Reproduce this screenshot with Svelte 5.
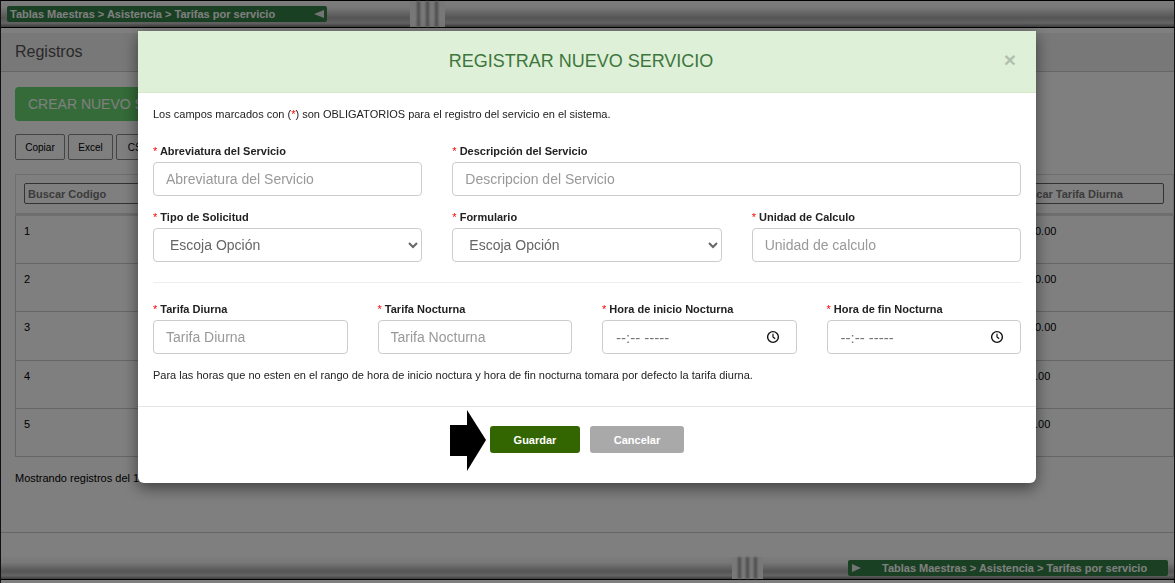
<script>
  const ruta = 'Tablas Maestras > Asistencia > Tarifas por servicio';
  const exportar = ['Copiar', 'Excel', 'CSV'];
  const filas = [
    { codigo: 1, tarifa: '15000.00' },
    { codigo: 2, tarifa: '15000.00' },
    { codigo: 3, tarifa: '15000.00' },
    { codigo: 4, tarifa: '9000.00' },
    { codigo: 5, tarifa: '9000.00' }
  ];
</script>

<div class="page">
  <div class="bar top">
    <div class="crumb">
      <span>{ruta}</span>
      <i class="tri left"></i>
    </div>
    <div class="handle top-handle"><b></b><b></b><b></b></div>
  </div>

  <div class="heading">Registros</div>

  <div class="content">
    <button class="crear">CREAR NUEVO SERVICIO</button>
    <div class="exports">
      {#each exportar as e}
        <button class="exp">{e}</button>
      {/each}
    </div>

    <table>
      <colgroup><col /><col class="last" /></colgroup>
      <thead>
        <tr>
          <th><input class="buscar" placeholder="Buscar Codigo" /></th>
          <th><input class="buscar" placeholder="Buscar Tarifa Diurna" /></th>
        </tr>
      </thead>
      <tbody>
        {#each filas as f}
          <tr>
            <td>{f.codigo}</td>
            <td>{f.tarifa}</td>
          </tr>
        {/each}
      </tbody>
    </table>

    <p class="info">Mostrando registros del 1 al 5</p>
  </div>

  <div class="spacer"></div>
  <div class="strip"></div>

  <div class="bar bottom">
    <div class="handle bottom-handle"><b></b><b></b><b></b></div>
    <div class="crumb right">
      <i class="tri"></i>
      <span>{ruta}</span>
    </div>
  </div>
</div>

<div class="overlay">
  <div class="modal">
    <header>
      <h4>REGISTRAR NUEVO SERVICIO</h4>
      <span class="close">×</span>
    </header>

    <div class="body">
      <p class="note">Los campos marcados con (<em>*</em>) son OBLIGATORIOS para el registro del servicio en el sistema.</p>

      <div class="row r1">
        <label class="field">
          <span class="lbl"><em>*</em> Abreviatura del Servicio</span>
          <input placeholder="Abreviatura del Servicio" />
        </label>
        <label class="field wide">
          <span class="lbl"><em>*</em> Descripción del Servicio</span>
          <input placeholder="Descripcion del Servicio" />
        </label>
      </div>

      <div class="row r2">
        <label class="field">
          <span class="lbl"><em>*</em> Tipo de Solicitud</span>
          <select><option>Escoja Opción</option></select>
        </label>
        <label class="field">
          <span class="lbl"><em>*</em> Formulario</span>
          <select><option>Escoja Opción</option></select>
        </label>
        <label class="field">
          <span class="lbl"><em>*</em> Unidad de Calculo</span>
          <input placeholder="Unidad de calculo" />
        </label>
      </div>

      <hr />

      <div class="row r3">
        <label class="field">
          <span class="lbl"><em>*</em> Tarifa Diurna</span>
          <input placeholder="Tarifa Diurna" />
        </label>
        <label class="field">
          <span class="lbl"><em>*</em> Tarifa Nocturna</span>
          <input placeholder="Tarifa Nocturna" />
        </label>
        {#each ['Hora de inicio Nocturna', 'Hora de fin Nocturna'] as hora}
          <div class="field">
            <span class="lbl"><em>*</em> {hora}</span>
            <div class="time">
              <span>--:-- -----</span>
              <svg width="14" height="14" viewBox="0 0 14 14" fill="none" stroke="#111" stroke-width="1.4">
                <circle cx="7" cy="7" r="5.4" />
                <path d="M7 3.8V7l2.2 1.8" stroke-width="1.2" />
              </svg>
            </div>
          </div>
        {/each}
      </div>

      <p class="note hint">Para las horas que no esten en el rango de hora de inicio noctura y hora de fin nocturna tomara por defecto la tarifa diurna.</p>
    </div>

    <footer>
      <button class="guardar">Guardar</button>
      <button class="cancelar">Cancelar</button>
      <svg class="arrow" width="36" height="61" viewBox="0 0 36 61">
        <polygon points="0,15 17,15 17,0 36,30 17,61 17,46 0,46" fill="#000" />
      </svg>
    </footer>
  </div>
</div>

<style>
  :global(body) {
    margin: 0;
    font-family: "Liberation Sans", Arial, sans-serif;
    overflow: hidden;
  }

  .page {
    height: 583px;
    box-sizing: border-box;
    display: flex;
    flex-direction: column;
    background: #fff;
    border-left: 1px solid #222;
    border-right: 1px solid #222;
    color: #000;
    overflow: hidden;
  }

  .bar {
    display: flex;
    align-items: center;
    flex: none;
    background: linear-gradient(#fafafa, #f0f0f0 25%, #aaa 65%, #c8c8c8 85%, #777);
  }

  .bar.top {
    height: 26px;
    border-top: 1px solid #000;
    border-bottom: 1px solid #000;
    padding-left: 6px;
  }

  .bar.bottom {
    height: 22px;
    margin-bottom: 3px;
    border-bottom: 1px solid #000;
    padding-left: 731px;
  }

  .crumb {
    height: 16px;
    width: 320px;
    box-sizing: border-box;
    background: #348146;
    color: #fff;
    font-size: 11px;
    font-weight: bold;
    display: flex;
    align-items: center;
    justify-content: space-between;
    padding: 0 3px 0 3px;
    border-radius: 2px;
  }

  .crumb.right {
    margin-left: 85px;
    justify-content: flex-start;
    gap: 21px;
    padding-left: 4px;
  }

  .tri {
    width: 0;
    height: 0;
    border-top: 4px solid transparent;
    border-bottom: 4px solid transparent;
    border-left: 9px solid #e8e8e8;
  }

  .tri.left {
    border-left: 0;
    border-right: 10px solid #e8e8e8;
  }

  .handle {
    display: flex;
    height: 100%;
    flex: none;
    justify-content: space-between;
    box-sizing: border-box;
    background: #f0f0f0;
  }

  .top-handle {
    width: 35px;
    margin-left: 83px;
    padding: 0 7px;
  }

  .bottom-handle {
    width: 31px;
    padding: 0 6px;
  }

  .handle b {
    width: 3px;
    background: #999;
    filter: blur(1px);
  }

  .heading {
    margin-top: 5px;
    height: 38px;
    line-height: 38px;
    padding-left: 14px;
    font-size: 16px;
    color: #555;
    background: #f0f0f0;
    border-bottom: 1px solid #ccc;
    flex: none;
  }

  .content {
    padding: 15px 0 0 14px;
  }

  .crear {
    display: block;
    height: 34px;
    width: 250px;
    border: 0;
    border-radius: 4px;
    background: #68d670;
    color: #fff;
    font: 14px "Liberation Sans", Arial, sans-serif;
    text-align: left;
    padding: 0 13px;
  }

  .exports {
    display: flex;
    gap: 3px;
    margin-top: 13px;
  }

  .exp {
    height: 26px;
    width: 50px;
    box-sizing: border-box;
    border: 1px solid #888;
    border-radius: 2px;
    background: #fff;
    color: #000;
    font: 10px "Liberation Sans", Arial, sans-serif;
  }

  .exp:nth-child(2) {
    width: 45px;
  }

  .exp:nth-child(3) {
    width: 44px;
  }

  table {
    width: 1159px;
    table-layout: fixed;
    border-collapse: collapse;
    margin-top: 14px;
    font-size: 11px;
  }

  col.last {
    width: 170px;
  }

  thead tr {
    height: 40px;
    border: 1px solid #ddd;
    border-bottom: 3px solid #ddd;
  }

  th {
    padding: 8px 9px 0 8px;
    text-align: left;
    vertical-align: top;
  }

  .buscar {
    width: 100%;
    height: 21px;
    box-sizing: border-box;
    border: 1px solid #666;
    border-radius: 2px;
    padding: 0 3px;
    background: transparent;
    font: bold 11px "Liberation Sans", Arial, sans-serif;
    display: block;
  }

  .buscar::placeholder {
    color: #777;
    opacity: 1;
  }

  tbody tr {
    height: 48px;
    border: 1px solid #ccc;
  }

  tbody tr:nth-child(odd):not(:last-child) {
    height: 49px;
  }

  td {
    padding: 9px 9px 0 8px;
    vertical-align: top;
    line-height: 12px;
  }

  td:last-child {
    padding-left: 7px;
  }

  .info {
    margin: 15px 0 0;
    font-size: 11px;
    line-height: 13px;
  }

  .spacer {
    flex: 1;
  }

  .strip {
    flex: none;
    height: 24px;
    border-top: 1px solid #ccc;
    background: #fff;
  }

  .overlay {
    position: fixed;
    inset: 0;
    background: rgba(0, 0, 0, 0.5);
  }

  .modal {
    position: absolute;
    left: 138px;
    top: 31px;
    width: 898px;
    background: #fff;
    border-radius: 0 0 6px 6px;
    box-shadow: 0 5px 15px rgba(0, 0, 0, 0.5);
  }

  header {
    height: 62px;
    box-sizing: border-box;
    background: #dff0d8;
    border-bottom: 1px solid #d6e9c6;
    display: flex;
    align-items: center;
    justify-content: center;
    padding-right: 12px;
    position: relative;
  }

  h4 {
    margin: 0;
    font-size: 18px;
    font-weight: normal;
    color: #3c763d;
  }

  .close {
    position: absolute;
    right: 20px;
    top: 15px;
    font-size: 21px;
    line-height: 27px;
    font-weight: bold;
    color: #000;
    opacity: 0.2;
  }

  .body {
    padding: 14px 15px 0;
  }

  .note {
    margin: 0;
    font-size: 11px;
    line-height: 14px;
    color: #222;
  }

  em {
    font-style: normal;
    color: #f00;
  }

  .row {
    display: grid;
    column-gap: 30px;
  }

  .r1 {
    margin-top: 23px;
    grid-template-columns: repeat(3, 1fr);
  }

  .r2 {
    margin-top: 14px;
    grid-template-columns: repeat(3, 1fr);
  }

  .r3 {
    margin-top: 19px;
    grid-template-columns: repeat(4, 1fr);
  }

  .wide {
    grid-column: span 2;
  }

  .field {
    display: block;
    min-width: 0;
  }

  .lbl {
    display: block;
    height: 14px;
    line-height: 14px;
    margin-bottom: 4px;
    font-size: 11px;
    font-weight: bold;
    color: #222;
    white-space: nowrap;
  }

  .lbl em {
    font-weight: normal;
  }

  .field input,
  .field select,
  .time {
    display: block;
    width: 100%;
    height: 34px;
    box-sizing: border-box;
    border: 1px solid #ccc;
    border-radius: 4px;
    padding: 0 12px;
    background: #fff;
    font: 14px "Liberation Sans", Arial, sans-serif;
    color: #666;
  }

  .field input::placeholder {
    color: #999;
    opacity: 1;
  }

  .time {
    display: flex;
    align-items: center;
    justify-content: space-between;
    padding: 0 16px 0 13px;
    font-size: 15px;
    color: #777;
  }

  hr {
    margin: 20px 0 0;
    border: 0;
    border-top: 1px solid #eee;
  }

  .hint {
    margin-top: 14px;
  }

  footer {
    margin-top: 24px;
    height: 77px;
    box-sizing: border-box;
    border-top: 1px solid #e5e5e5;
    padding-top: 19px;
    display: flex;
    justify-content: center;
    align-items: flex-start;
    gap: 10px;
    position: relative;
  }

  footer button {
    height: 27px;
    border: 0;
    border-radius: 3px;
    color: #fff;
    font: bold 11px "Liberation Sans", Arial, sans-serif;
    padding: 0;
  }

  .guardar {
    width: 90px;
    background: #336600;
  }

  .cancelar {
    width: 94px;
    background: #a9a9a9;
  }

  .arrow {
    position: absolute;
    left: 312px;
    top: 3px;
  }
</style>
